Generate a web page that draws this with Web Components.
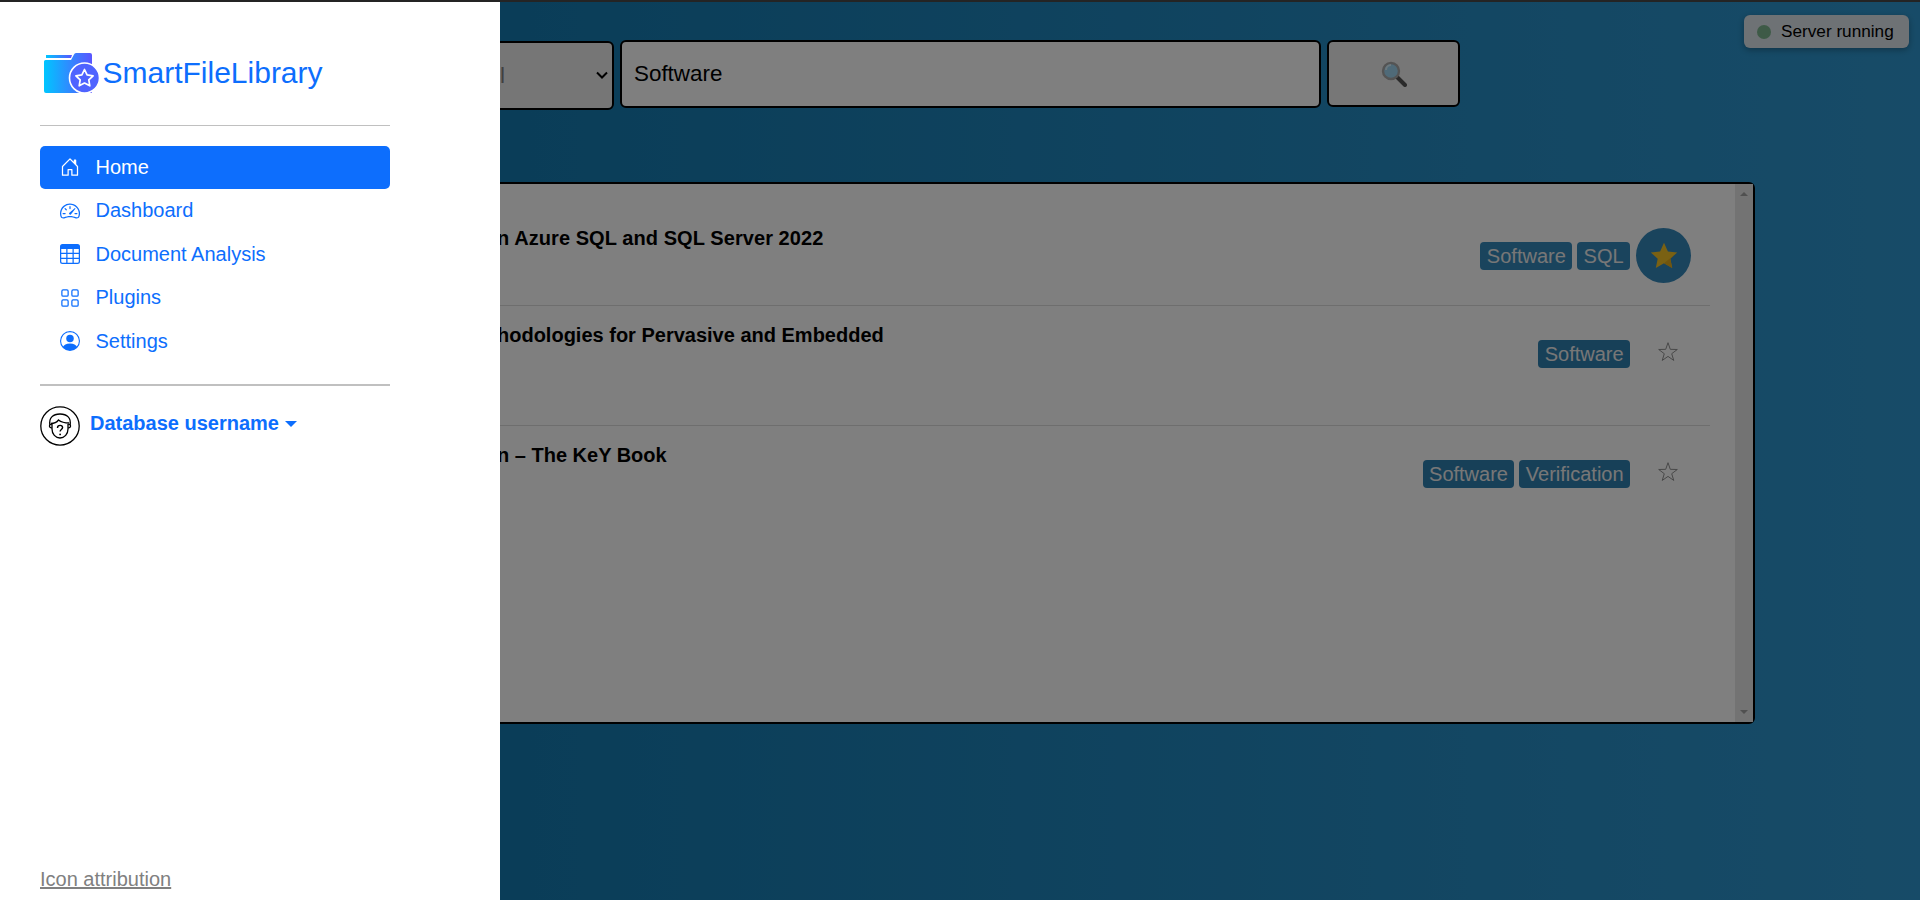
<!DOCTYPE html>
<html lang="en">
<head>
<meta charset="utf-8">
<title>SmartFileLibrary</title>
<style>
  html, body { margin: 0; padding: 0; height: 100%; overflow: hidden; font-family: "Liberation Sans", Arial, sans-serif; }
</style>
</head>
<body>
<sfl-app>
  <sfl-search value="Software"></sfl-search>
  <sfl-panel>
    <sfl-row title-text="n Azure SQL and SQL Server 2022" tags="Software,SQL" favourite></sfl-row>
    <sfl-row title-text="hodologies for Pervasive and Embedded" tags="Software" tall></sfl-row>
    <sfl-row title-text="n – The KeY Book" tags="Software,Verification" tall last></sfl-row>
  </sfl-panel>
  <sfl-status slot="status">Server running</sfl-status>
  <sfl-sidebar slot="sidebar">
    <sfl-nav-item icon="house" active>Home</sfl-nav-item>
    <sfl-nav-item icon="speedometer">Dashboard</sfl-nav-item>
    <sfl-nav-item icon="table">Document Analysis</sfl-nav-item>
    <sfl-nav-item icon="grid">Plugins</sfl-nav-item>
    <sfl-nav-item icon="person">Settings</sfl-nav-item>
  </sfl-sidebar>
</sfl-app>

<script>
const ICONS = {
    house: '<path d="M8.354 1.146a.5.5 0 0 0-.708 0l-6 6A.5.5 0 0 0 1.5 7.5v7a.5.5 0 0 0 .5.5h4.5a.5.5 0 0 0 .5-.5v-4h2v4a.5.5 0 0 0 .5.5H14a.5.5 0 0 0 .5-.5v-7a.5.5 0 0 0-.146-.354L13 5.793V2.5a.5.5 0 0 0-.5-.5h-1a.5.5 0 0 0-.5.5v1.293zM2.5 14V7.707l5.5-5.5 5.5 5.5V14H10v-4a.5.5 0 0 0-.5-.5h-3a.5.5 0 0 0-.5.5v4z"/>',
    speedometer: '<path d="M8 4a.5.5 0 0 1 .5.5V6a.5.5 0 0 1-1 0V4.5A.5.5 0 0 1 8 4M3.732 5.732a.5.5 0 0 1 .707 0l.915.914a.5.5 0 1 1-.708.708l-.914-.915a.5.5 0 0 1 0-.707M2 10a.5.5 0 0 1 .5-.5h1.586a.5.5 0 0 1 0 1H2.5A.5.5 0 0 1 2 10m9.5 0a.5.5 0 0 1 .5-.5h1.5a.5.5 0 0 1 0 1H12a.5.5 0 0 1-.5-.5m.754-4.246a.39.39 0 0 0-.527-.02L7.547 9.31a.91.91 0 1 0 1.302 1.258l3.434-4.297a.39.39 0 0 0-.029-.518z"/><path fill-rule="evenodd" d="M0 10a8 8 0 1 1 15.547 2.661c-.442 1.253-1.845 1.602-2.932 1.25C11.309 13.488 9.475 13 8 13c-1.474 0-3.31.488-4.615.911-1.087.352-2.49.003-2.932-1.25A8 8 0 0 1 0 10m8-7a7 7 0 0 0-6.603 9.329c.203.575.923.876 1.68.63C4.397 12.533 6.358 12 8 12s3.604.532 4.923.96c.757.245 1.477-.056 1.68-.631A7 7 0 0 0 8 3"/>',
    table: '<path d="M0 2a2 2 0 0 1 2-2h12a2 2 0 0 1 2 2v12a2 2 0 0 1-2 2H2a2 2 0 0 1-2-2zm15 2h-4v3h4zm0 4h-4v3h4zm0 4h-4v3h3a1 1 0 0 0 1-1zm-5 3v-3H6v3zm-5 0v-3H1v2a1 1 0 0 0 1 1zm-4-4h4V8H1zm0-4h4V4H1zm5-3v3h4V4zm4 4H6v3h4z"/>',
    grid: '<path d="M1 2.5A1.5 1.5 0 0 1 2.5 1h3A1.5 1.5 0 0 1 7 2.5v3A1.5 1.5 0 0 1 5.5 7h-3A1.5 1.5 0 0 1 1 5.5zM2.5 2a.5.5 0 0 0-.5.5v3a.5.5 0 0 0 .5.5h3a.5.5 0 0 0 .5-.5v-3a.5.5 0 0 0-.5-.5zm6.5.5A1.5 1.5 0 0 1 10.5 1h3A1.5 1.5 0 0 1 15 2.5v3A1.5 1.5 0 0 1 13.5 7h-3A1.5 1.5 0 0 1 9 5.5zm1.5-.5a.5.5 0 0 0-.5.5v3a.5.5 0 0 0 .5.5h3a.5.5 0 0 0 .5-.5v-3a.5.5 0 0 0-.5-.5zM1 10.5A1.5 1.5 0 0 1 2.5 9h3A1.5 1.5 0 0 1 7 10.5v3A1.5 1.5 0 0 1 5.5 15h-3A1.5 1.5 0 0 1 1 13.5zm1.5-.5a.5.5 0 0 0-.5.5v3a.5.5 0 0 0 .5.5h3a.5.5 0 0 0 .5-.5v-3a.5.5 0 0 0-.5-.5zm6.5.5A1.5 1.5 0 0 1 10.5 9h3a1.5 1.5 0 0 1 1.5 1.5v3a1.5 1.5 0 0 1-1.5 1.5h-3A1.5 1.5 0 0 1 9 13.5zm1.5-.5a.5.5 0 0 0-.5.5v3a.5.5 0 0 0 .5.5h3a.5.5 0 0 0 .5-.5v-3a.5.5 0 0 0-.5-.5z"/>',
    person: '<path d="M11 6a3 3 0 1 1-6 0 3 3 0 0 1 6 0"/><path fill-rule="evenodd" d="M0 8a8 8 0 1 1 16 0A8 8 0 0 1 0 8m8-7a7 7 0 0 0-5.468 11.37C3.242 11.226 4.805 10 8 10s4.757 1.225 5.468 2.37A7 7 0 0 0 8 1"/>'
};

class SflApp extends HTMLElement {
    constructor() {
        super();
        this.attachShadow({ mode: 'open' });
        this.shadowRoot.innerHTML = `
      <style>
        :host {
          display: block;
          position: relative;
          box-sizing: border-box;
          height: 900px;
          overflow: hidden;
          border-top: 2px solid #242424;
          background: linear-gradient(90deg, #147ab0 0%, #147ab0 25%, #2f97d0 100%);
        }
        main {
          padding: 38px 165px 0 166px;
        }
        .backdrop {
          position: absolute;
          inset: 0;
          background: rgba(0, 0, 0, .5);
        }
      </style>
      <main><slot></slot></main>
      <slot name="status"></slot>
      <div class="backdrop"></div>
      <slot name="sidebar"></slot>
    `;
    }
}

class SflSearch extends HTMLElement {
    constructor() {
        super();
        this.attachShadow({ mode: 'open' });
    }

    connectedCallback() {
        this.shadowRoot.innerHTML = `
      <style>
        :host {
          display: flex;
          align-items: flex-start;
          gap: 6px;
          margin-left: 300px;
        }
        select, input, button {
          box-sizing: border-box;
          border: 2px solid #000;
          border-radius: 6px;
          font: 22.4px "Liberation Sans", Arial, sans-serif;
          color: #000;
          margin: 0;
        }
        .picker {
          position: relative;
          margin-top: 1px;
          height: 69px;
        }
        .picker svg {
          position: absolute;
          top: 30px;
          right: 6px;
        }
        select {
          appearance: none;
          width: 148px;
          height: 69px;
          padding-left: 12px;
          background-color: #ededed;
          color: #808080;
        }
        input {
          width: 701px;
          height: 68px;
          padding: 0 12px;
          background: #fff;
        }
        button {
          width: 133px;
          height: 67px;
          background: #efefef;
          display: flex;
          align-items: center;
          justify-content: center;
        }
      </style>
      <div class="picker">
        <select><option>All</option></select>
        <svg width="12" height="8" viewBox="0 0 12 8" fill="none" stroke="#000" stroke-width="2"><path d="M1 1.500l5 5 5-5"/></svg>
      </div>
      <input type="text" value="${this.getAttribute('value')}">
      <button type="button" aria-label="Search">
        <svg width="26" height="26" viewBox="0 0 26 26">
          <path d="M15.500 15.500 L24 24" stroke="#555" stroke-width="4" stroke-linecap="round"/>
          <circle cx="10" cy="10" r="8" fill="#9fd4f0" stroke="#a8a8a8" stroke-width="2.400"/>
          <path d="M5 9a5 5 0 0 1 5-5" fill="none" stroke="#d8f0fb" stroke-width="2"/>
        </svg>
      </button>
    `;
    }
}

class SflPanel extends HTMLElement {
    constructor() {
        super();
        this.attachShadow({ mode: 'open' });
        this.shadowRoot.innerHTML = `
      <style>
        :host {
          display: flex;
          box-sizing: border-box;
          height: 542px;
          margin-top: 72px;
          border: 2px solid #000;
          border-radius: 6px;
          background: #fff;
        }
        .list {
          flex: 1;
          min-width: 0;
          padding: 24px 25px 0 329px;
        }
        .scrollbar {
          width: 18px;
          background: #e6e6e6;
          display: flex;
          flex-direction: column;
          justify-content: space-between;
          align-items: center;
          padding: 8px 0;
          box-sizing: border-box;
        }
        .up, .down {
          width: 0;
          height: 0;
          border-left: 4px solid transparent;
          border-right: 4px solid transparent;
        }
        .up { border-bottom: 4px solid #a0a0a0; }
        .down { border-top: 4px solid #a0a0a0; }
      </style>
      <div class="list"><slot></slot></div>
      <div class="scrollbar"><div class="up"></div><div class="down"></div></div>
    `;
    }
}

class SflRow extends HTMLElement {
    constructor() {
        super();
        this.attachShadow({ mode: 'open' });
    }

    connectedCallback() {
        const tags = this.getAttribute('tags').split(',')
            .map(t => `<span class="tag">${t}</span>`).join('');
        const star = this.hasAttribute('favourite')
            ? `<span class="star on"><svg width="28" height="27" viewBox="0 0 28 27"><path d="M14 .8l3.900 8.600 9.300 1-6.900 6.300 1.900 9.200L14 21.200l-8.200 4.700 1.900-9.200L.8 10.400l9.300-1z" fill="#f5c326"/><path d="M14 21.200l8.200 4.700-1.900-9.200L26 11.500z" fill="#e3ab1c"/></svg></span>`
            : `<span class="star"><svg width="20" height="20" viewBox="0 0 20 20"><path d="M10 .7L12.290 7.340 19.320 7.470 13.710 11.710 15.760 18.430 10 14.400 4.240 18.430 6.290 11.710 .68 7.470 7.710 7.340z" fill="none" stroke="#909090" stroke-width="1"/></svg></span>`;
        this.shadowRoot.innerHTML = `
      <style>
        :host {
          display: flex;
          box-sizing: border-box;
          height: 98px;
          border-bottom: 1px solid #dcdcdc;
          --tag: #2f80b0;
          --title-top: 19px;
          --title-spacing: .07px;
        }
        :host([favourite]) { --tag: #3588ba; }
        :host([tall]) { height: 120px; --title-top: 18px; --title-spacing: 0; }
        :host([last]) { border-bottom: 0; }
        .title {
          flex: 1;
          min-width: 0;
          margin-top: var(--title-top);
          font: bold 20px/23px "Liberation Sans", Arial, sans-serif;
          letter-spacing: var(--title-spacing);
          color: #000;
          white-space: nowrap;
        }
        .side {
          display: flex;
          gap: 5px;
          align-items: center;
          height: 55px;
          margin: 20px 19px 0 0;
        }
        .tag {
          height: 28px;
          padding: 0 6.400px;
          border-radius: 4px;
          background: var(--tag);
          color: #eee;
          font: 20px/28px "Liberation Sans", Arial, sans-serif;
        }
        .star {
          box-sizing: border-box;
          width: 55px;
          height: 55px;
          margin-left: 1px;
          padding: 0 0 4px 9px;
          display: flex;
          align-items: center;
          justify-content: center;
        }
        .star.on {
          padding: 0;
          border-radius: 50%;
          background: var(--tag);
        }
        .star svg { display: block; }
      </style>
      <div class="title">${this.getAttribute('title-text')}</div>
      <div class="side">${tags}${star}</div>
    `;
    }
}

class SflStatus extends HTMLElement {
    constructor() {
        super();
        this.attachShadow({ mode: 'open' });
        this.shadowRoot.innerHTML = `
      <style>
        :host {
          position: absolute;
          top: 13px;
          right: 11px;
          box-sizing: border-box;
          width: 165px;
          height: 33px;
          display: flex;
          align-items: center;
          gap: 10px;
          padding-left: 13px;
          border-radius: 6px;
          background: #dde4ea;
          box-shadow: 0 2px 6px rgba(0, 0, 0, .3);
          color: #000;
          font: 17.200px "Liberation Sans", Arial, sans-serif;
        }
        i {
          width: 14px;
          height: 14px;
          border-radius: 50%;
          background: #7db58f;
        }
      </style>
      <i></i><slot></slot>
    `;
    }
}

class SflNavItem extends HTMLElement {
    constructor() {
        super();
        this.attachShadow({ mode: 'open' });
    }

    connectedCallback() {
        this.shadowRoot.innerHTML = `
      <style>
        :host {
          display: flex;
          align-items: center;
          gap: 15.500px;
          box-sizing: border-box;
          height: 43.500px;
          padding-left: 20px;
          border-radius: 5px;
          color: #0d6efd;
          font: 20px "Liberation Sans", Arial, sans-serif;
        }
        :host([active]) {
          background: #0d6efd;
          color: #fff;
        }
        svg { display: block; flex: none; }
      </style>
      <svg width="20" height="20" viewBox="0 0 16 16" fill="currentColor">${ICONS[this.getAttribute('icon')]}</svg>
      <slot></slot>
    `;
    }
}

class SflSidebar extends HTMLElement {
    constructor() {
        super();
        this.attachShadow({ mode: 'open' });
        this.shadowRoot.innerHTML = `
      <style>
        :host {
          position: absolute;
          top: 0;
          left: 0;
          bottom: 0;
          width: 500px;
          box-sizing: border-box;
          padding: 48px 110px 9px 40px;
          background: #fff;
          display: flex;
          flex-direction: column;
          font-family: "Liberation Sans", Arial, sans-serif;
        }
        .brand {
          display: flex;
          align-items: center;
          gap: 3.500px;
          height: 46px;
          margin-bottom: 29px;
          padding-left: 4px;
          color: #0d6efd;
          font-size: 30px;
        }
        .rule {
          height: 1px;
          background: #c0c0c0;
          margin-bottom: 19.500px;
          flex: none;
        }
        .rule.thick {
          height: 2px;
          margin: 20.500px 0 20px;
        }
        .user {
          display: flex;
          align-items: center;
          gap: 10px;
          color: #0d6efd;
          font-weight: bold;
          font-size: 20px;
        }
        .user > span { padding-bottom: 4px; }
        .caret {
          display: inline-block;
          margin-left: 6px;
          vertical-align: 3px;
          border-top: 6px solid currentColor;
          border-left: 6px solid transparent;
          border-right: 6px solid transparent;
        }
        a {
          margin-top: auto;
          color: #808080;
          font-size: 20px;
          line-height: 23px;
          text-decoration: underline;
        }
        svg { display: block; flex: none; }
      </style>
      <div class="brand">
        <svg width="55" height="40" viewBox="0 0 55 40">
          <defs>
            <linearGradient id="fold" x1="0" x2="1" y1="0" y2="0">
              <stop offset="0" stop-color="#00c6ff"/>
              <stop offset="1" stop-color="#5a55ff"/>
            </linearGradient>
          </defs>
          <path d="M2 2 H28 L27 5 H2z" fill="url(#fold)"/>
          <path d="M0 8.500 Q0 7 1.500 7 H27 L30 1.500 Q30.500 0 32 0 H46 Q48 0 48 2 V40 H2 Q0 40 0 38z" fill="url(#fold)"/>
          <circle cx="40.500" cy="25" r="15" fill="#4f63ff" stroke="#fff" stroke-width="1.600"/>
          <path d="M40.500 16.500l2.600 5.400 6 .9-4.300 4.100 1 5.900-5.300-2.800-5.300 2.800 1-5.900-4.300-4.100 6-.9z" fill="none" stroke="#fff" stroke-width="1.700" stroke-linejoin="round"/>
        </svg>
        <span>SmartFileLibrary</span>
      </div>
      <div class="rule"></div>
      <nav><slot></slot></nav>
      <div class="rule thick"></div>
      <div class="user">
        <svg width="40" height="40" viewBox="0 0 40 40" fill="none" stroke="#000" stroke-width="1.300">
          <circle cx="20" cy="20" r="19.200"/>
          <path d="M10 19C8.500 12 13 8 20 8s11.500 4 10 11"/>
          <path d="M10.800 17.500c3.200 0 6.200-1.500 7.700-3.500 2.500 2 6.500 3 10.700 3"/>
          <path d="M12 18v5c0 5 3.500 9 8 9s8-4 8-9v-5"/>
          <path d="M11.800 18.500c-1.600-.3-2.500.6-2.300 1.800.2 1.100 1 1.700 2.400 1.600M28.200 18.500c1.600-.3 2.500.6 2.300 1.800-.2 1.100-1 1.700-2.400 1.600"/>
          <path d="M17.500 22c0-1.600 1.100-2.600 2.600-2.600s2.500 1 2.500 2.200c0 1.800-2.500 1.900-2.500 3.800" stroke-width="1.400"/>
          <circle cx="20.100" cy="28.400" r=".9" fill="#000" stroke="none"/>
        </svg>
        <span>Database username<span class="caret"></span></span>
      </div>
      <a href="#">Icon attribution</a>
    `;
    }
}

customElements.define('sfl-app', SflApp);
customElements.define('sfl-search', SflSearch);
customElements.define('sfl-panel', SflPanel);
customElements.define('sfl-row', SflRow);
customElements.define('sfl-status', SflStatus);
customElements.define('sfl-nav-item', SflNavItem);
customElements.define('sfl-sidebar', SflSidebar);
</script>
</body>
</html>
